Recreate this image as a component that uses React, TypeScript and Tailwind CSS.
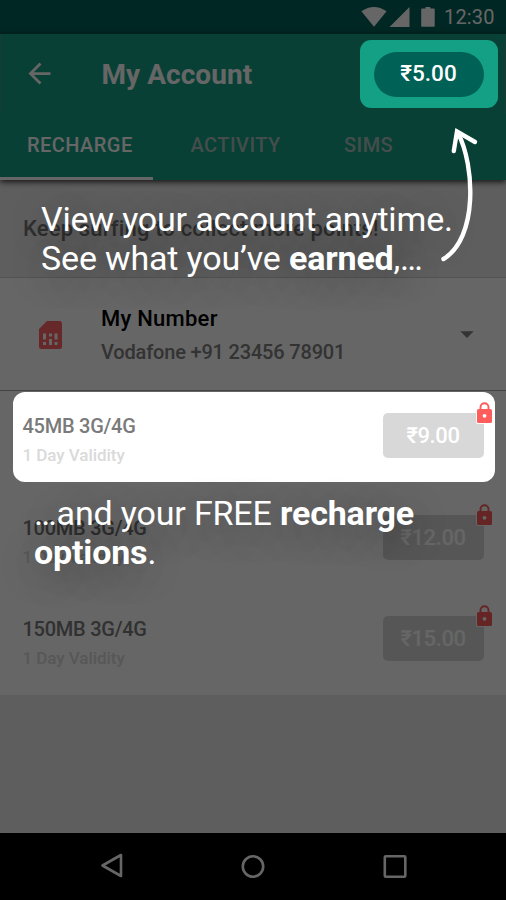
import React from "react";
import { MdArrowBack, MdArrowDropDown } from "react-icons/md";

const tabs = [
  { id: 1, name: "RECHARGE", className: "w-[153px] pl-[27px] text-white" },
  { id: 2, name: "ACTIVITY", className: "w-[164px] pl-[37.500px] text-[#abc0bc]" },
  { id: 3, name: "SIMS", className: "pl-[27px] text-[#abc0bc]" },
];

const packs = [
  { id: 1, name: "45MB 3G/4G", validity: "1 Day Validity", price: "₹9.00" },
  { id: 2, name: "100MB 3G/4G", validity: "1 Day Validity", price: "₹12.00" },
  { id: 3, name: "150MB 3G/4G", validity: "1 Day Validity", price: "₹15.00" },
];

const StatusBar = () => (
  <div className="flex h-[34px] items-center justify-end bg-[#006158] pr-[11px] text-white">
    <svg className="h-[34px] w-[80px]" viewBox="0 0 80 34" fill="currentColor">
      <path d="M6.4 11.2Q18.9 2.6 31.6 11.2L19 26.8Z" />
      <path d="M54.5 7V27H34.5Z" />
      <path d="M67 8.4h3.5V7h4.8v1.4h3.6q.8 0 .8.8V26q0 .8-.8.8H67q-.8 0-.8-.8V9.2q0-.8.8-.8Z" />
    </svg>
    <span className="ml-[9px] w-[51px] text-[20px] leading-[34px] tracking-[0.150px] whitespace-nowrap">12:30</span>
  </div>
);

const Header = () => (
  <header className="relative h-[146px] bg-[#14a085] text-white shadow-[0_2px_6px_rgba(0,0,0,0.8)]">
    <div className="flex h-[79px] items-center justify-between border-x border-[#3f9583] pr-[7.500px] pl-[23px]">
      <div className="flex items-center">
        <MdArrowBack className="size-[33px] -ml-[1.500px]" />
        <h1 className="mt-[3px] ml-[46px] text-[28px] leading-none font-bold tracking-[0.05px]">My Account</h1>
      </div>
      {/* stays above the dark overlay */}
      <div className="relative z-20 mt-px flex h-[68px] w-[138px] items-center justify-center rounded-[11px] bg-[#14a085]">
        <div className="flex h-[45px] w-[110px] items-center justify-center rounded-full bg-[#006156] text-[22.500px] font-medium">
          ₹5.00
        </div>
      </div>
    </div>
    <ul className="flex h-[67px] text-[20px] font-medium tracking-[0.450px]">
      {tabs.map((tab) => (
        <li
          key={tab.id}
          className={`${tab.className} leading-[65px] ${tab.id === 1 ? "border-b-[3px] border-white" : ""}`}
        >
          {tab.name}
        </li>
      ))}
    </ul>
  </header>
);

const SimCard = () => (
  <svg className="mt-px h-[28px] w-[23px]" viewBox="0 0 23 28">
    <path d="M8 0h12.500q2.500 0 2.500 2.500v23q0 2.500-2.500 2.500h-18Q0 28 0 25.500V8Z" fill="#ff6464" />
    <path
      d="M4 12.500h3v6H4zM10 12.500h3v3h-3zM15.500 12.500h3v6h-3zM4 21h3v3H4zM10 18h3v6h-3zM15.500 21h3v3h-3z"
      fill="#fff"
    />
  </svg>
);

const Lock = () => (
  <svg className="absolute -top-[12px] -right-[10px] h-[24px] w-[19px]" viewBox="0 0 19 24">
    <rect x="1" y="7" width="17" height="16" rx="2.500" fill="#fff" />
    <path d="M5.500 9V6.200a4 4 0 0 1 8 0V9" fill="none" stroke="#ff5c5c" strokeWidth="1.900" />
    <rect x="2" y="8" width="15" height="14" rx="1.500" fill="#ff5c5c" />
    <circle cx="9.500" cy="14.800" r="1.900" fill="#fff" />
  </svg>
);

const MyNumber = () => (
  <div className="flex h-[113px] items-center border-b border-[#a8a8a8] bg-white pr-[23.500px] pl-[39px]">
    <SimCard />
    <div className="mt-[2px] ml-[39px] flex-1 whitespace-nowrap">
      <p className="text-[22px] leading-[33px] font-medium tracking-[0.250px] text-black">My Number</p>
      <p className="text-[20px] leading-[34px] font-medium tracking-[-0.180px] text-[#808080]">
        Vodafone +91 23456 78901
      </p>
    </div>
    <MdArrowDropDown className="size-[32px] text-[#808080]" />
  </div>
);

const PackRow = ({ pack }: { pack: (typeof packs)[0] }) => {
  const active = pack.id === 1;
  return (
    <li
      className={`flex h-[90px] items-center justify-between rounded-[12px] pr-[11.500px] pl-[10px] ${
        active ? "relative z-20 bg-white" : ""
      }`}
    >
      <div className="mt-[8px] whitespace-nowrap">
        <p className="text-[20px] leading-[29px] font-medium tracking-[-0.250px] text-[#7a7a7a]">{pack.name}</p>
        <p className="text-[17px] leading-[29px] font-medium tracking-[-0.050px] text-[#dadada]">{pack.validity}</p>
      </div>
      <div className="relative mb-[3px] flex h-[45px] w-[101px] items-center justify-center rounded-[5px] bg-[#d8d8d8] text-[22px] font-medium tracking-[-0.400px] text-white">
        {pack.price}
        <Lock />
      </div>
    </li>
  );
};

const NavigationBar = () => (
  <div className="h-[67px] bg-black">
    <svg className="h-[67px] w-[506px]" viewBox="0 0 506 67" fill="none" stroke="#fff" strokeWidth="2.600" strokeLinejoin="round">
      <path d="M102.500 32.500L121 22V43Z" />
      <circle cx="253" cy="33.500" r="10.200" />
      <rect x="384.800" y="23.300" width="20.500" height="20.500" rx="1" />
    </svg>
  </div>
);

const App = () => {
  return (
    <div
      className="relative h-[900px] w-[506px] overflow-hidden bg-[#ebebeb]"
      style={{ fontFamily: "Roboto, sans-serif" }}
    >
      <div className="flex h-full flex-col">
        <StatusBar />
        <Header />
        <div className="h-[98px] border-b border-[#cfcfcf] bg-[#ebebeb] pl-[23px] text-[22px] leading-[97px] font-medium tracking-[0.160px] whitespace-nowrap text-[#777]">
          Keep surfing to collect more points!
        </div>
        <MyNumber />
        <ul className="flex h-[304px] flex-col gap-[11.300px] bg-white pt-[1.300px] pr-[11px] pl-[12.500px]">
          {packs.map((pack) => (
            <PackRow key={pack.id} pack={pack} />
          ))}
        </ul>
        <div className="flex-1" />
        <NavigationBar />
      </div>

      {/* tutorial overlay */}
      <div className="absolute inset-0 z-10 bg-black/60" />
      <p className="absolute top-[199.500px] left-[41px] z-30 text-[34px] leading-[39.500px] tracking-[-0.160px] whitespace-nowrap text-white [text-shadow:0_8px_36px_rgba(0,0,0,0.35)]">
        View your account anytime.
        <br />
        See what you’ve <b>earned</b>,…
      </p>
      <p className="absolute top-[493.500px] left-[34px] z-30 text-[34px] leading-[39.500px] tracking-[-0.160px] whitespace-nowrap text-white [text-shadow:0_8px_36px_rgba(0,0,0,0.35)]">
        …and your FREE <b>recharge</b>
        <br />
        <b>options</b>.
      </p>
      <svg
        className="absolute top-[120px] left-[436px] z-30 h-[150px] w-[50px]"
        viewBox="436 120 50 150"
        fill="none"
        stroke="#fff"
        strokeWidth="4.400"
        strokeLinecap="round"
      >
        <path d="M443.500 259C478 238 475 166 458 133" />
        <path d="M453.800 151L457 131.500L475 142" strokeLinejoin="miter" />
      </svg>
    </div>
  );
};

export default App;
